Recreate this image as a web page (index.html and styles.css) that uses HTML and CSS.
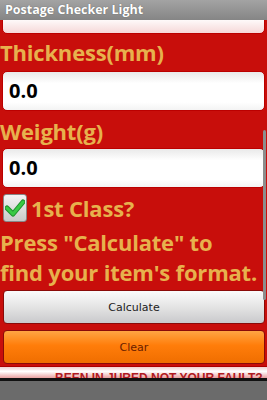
FILE: index.html
```html
<!DOCTYPE html>
<html lang="en">
<head>
    <meta charset="UTF-8">
    <title>Postage Checker Light</title>
    <link rel="stylesheet" href="styles.css">
</head>
<body>
    <div class="titlebar">Postage Checker Light</div>
    <div class="screen">
        <div class="scroll">
            <div class="field cut"></div>
            <div class="label l1">Thickness(mm)</div>
            <div class="field f1">0.0</div>
            <div class="label l2">Weight(g)</div>
            <div class="field f2">0.0</div>
            <div class="check">
                <span class="box">
                    <svg width="20" height="18" viewBox="0 0 20 18"><path d="M2 9 L8 15 L18 3" fill="none" stroke="#1e8f2c" stroke-width="5" stroke-linecap="round" stroke-linejoin="round"/><path d="M2 9 L8 15 L18 3" fill="none" stroke="#38c944" stroke-width="3" stroke-linecap="round" stroke-linejoin="round"/></svg>
                </span>
                <span class="label">1st Class?</span>
            </div>
            <div class="label hint">Press "Calculate" to<br>find your item's format.</div>
            <div class="btn calc">Calculate</div>
            <div class="btn clear">Clear</div>
        </div>
        <div class="scrollbar"></div>
    </div>
    <div class="ad"><span>BEEN IN JURED NOT YOUR FAULT?</span></div>
    <div class="bottom"></div>
</body>
</html>
```

FILE: styles.css
```css
*{margin: 0;padding: 0;box-sizing: border-box;}
body{width: 267px;height: 400px;overflow: hidden;background: #6b6b6b;font-family: "Open Sans", "DejaVu Sans", sans-serif;}
.titlebar{height: 20px;line-height: 20px;padding-left: 5px;color: #fff;font-size: 12.5px;font-weight: bold;background: linear-gradient(#a3a3a3, #858585);text-shadow: 0 0 1px #555;}
.screen{position: relative;height: 346px;background: #c80e0b;overflow: hidden;}
.scroll{display: flex;flex-direction: column;margin-top: -26px;}
.field{height: 40px;margin: 0 2px;border-radius: 5px;background: linear-gradient(#e9e9e9, #fff 30%, #fff 80%, #f3f3f3);border: 1px solid #b00;font-size: 20px;font-weight: bold;line-height: 38px;padding-left: 6px;color: #000;}
.field.cut{background: linear-gradient(#fff 60%, #f6d8d8);}
.label{color: #e7b14d;font-size: 22px;font-weight: bold;line-height: 30px;letter-spacing: -0.2px;white-space: nowrap;}
.l1{margin-top: 3px;}
.f1{margin-top: 4px;}
.l2{margin-top: 5px;}
.f2{margin-top: 2px;}
.check{display: flex;align-items: center;gap: 4px;margin-top: 5px;height: 30px;}
.box{width: 24px;height: 28px;margin-left: 3px;border-radius: 3px;background: linear-gradient(#f4f4f4, #c9c9c9);border: 1px solid #888;display: flex;align-items: center;justify-content: center;}
.hint{margin-top: 4px;}
.btn{height: 34px;margin: 0 2px 0 3px;border-radius: 4px;text-align: center;line-height: 34px;font-size: 11px;font-family: "DejaVu Sans", sans-serif;border: 1px solid #8a0a08;}
.calc{margin-top: 3px;background: linear-gradient(#fbfbfb, #e4e4e4 50%, #c9c9cc);color: #222;}
.clear{margin-top: 6px;background: linear-gradient(#ffa544, #ff7d0a 45%, #f06e00);color: #6a2000;}
.scrollbar{position: absolute;right: 1px;top: 110px;width: 3px;height: 170px;border-radius: 2px;background: #8d8d8d;}
.ad{height: 12px;overflow: hidden;background: linear-gradient(#f0d0d0, #fff 40%, #e8a0a0);border-top: 1px solid #a00;}
.ad span{display: block;margin-left: 55px;margin-top: 4px;color: #b01a22;font-size: 12px;font-weight: bold;font-family: "Liberation Sans", sans-serif;white-space: nowrap;}
.bottom{height: 3px;background: #111;}
```
